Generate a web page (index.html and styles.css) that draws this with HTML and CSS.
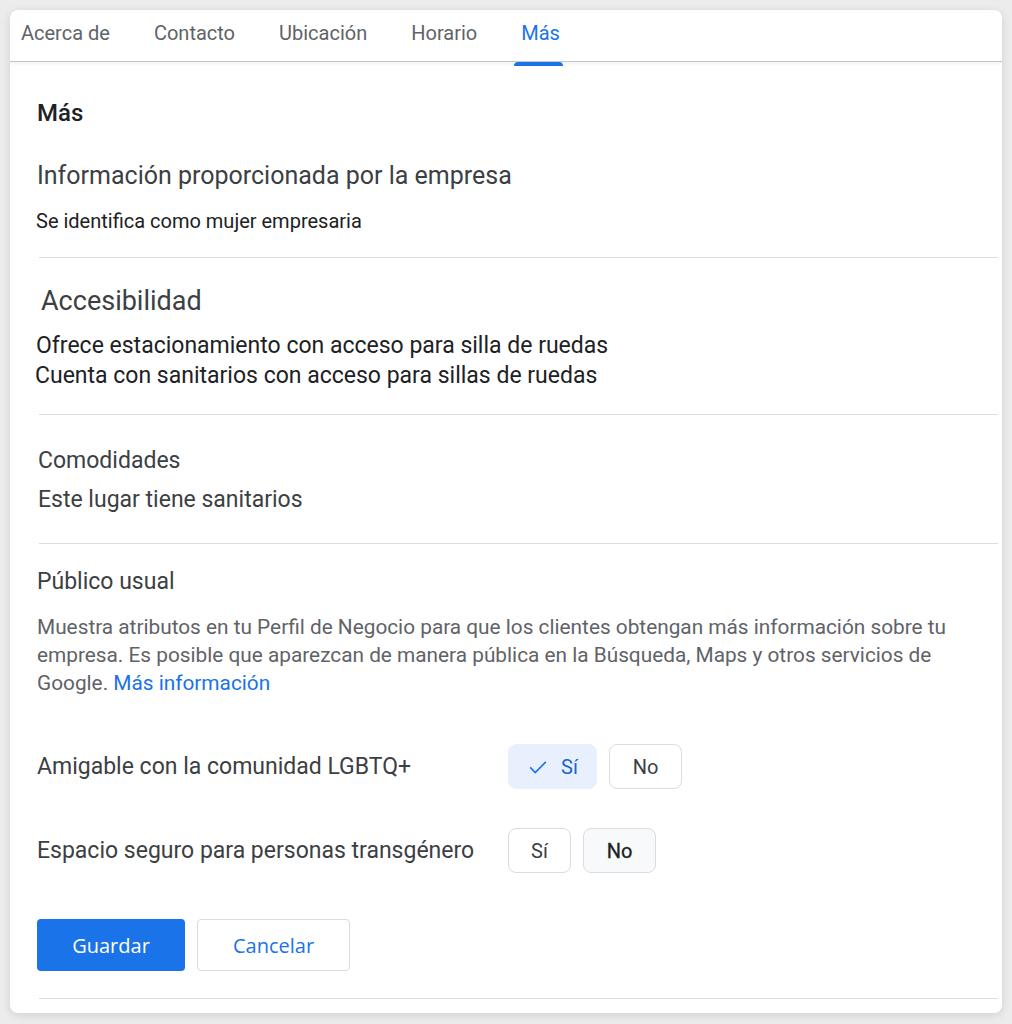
FILE: index.html
```html
<!DOCTYPE html>
<html lang="es">
<head>
    <meta charset="UTF-8">
    <meta name="viewport" content="width=device-width, initial-scale=1.0">
    <title>Más</title>
    <link rel="stylesheet" href="styles.css">
</head>
<body>
    <div class="card">
        <nav class="tabs">
            <a class="tab">Acerca de</a>
            <a class="tab">Contacto</a>
            <a class="tab">Ubicación</a>
            <a class="tab">Horario</a>
            <a class="tab active">Más</a>
        </nav>
        <div class="content">
            <h1 class="page-title">Más</h1>

            <section class="block first">
                <h2 class="info-title">Información proporcionada por la empresa</h2>
                <p class="info-text">Se identifica como mujer empresaria</p>
            </section>
            <hr class="divider">

            <section class="block access">
                <h2 class="access-title">Accesibilidad</h2>
                <p class="access-line">Ofrece estacionamiento con acceso para silla de ruedas</p>
                <p class="access-line second">Cuenta con sanitarios con acceso para sillas de ruedas</p>
            </section>
            <hr class="divider">

            <section class="block amenities">
                <h2 class="sub-title">Comodidades</h2>
                <p class="amenity">Este lugar tiene sanitarios</p>
            </section>
            <hr class="divider">

            <section class="block audience">
                <h2 class="sub-title">Público usual</h2>
                <p class="help">Muestra atributos en tu Perfil de Negocio para que los clientes obtengan más información sobre tu empresa. Es posible que aparezcan de manera pública en la Búsqueda, Maps y otros servicios de Google. <a class="link">Más información</a></p>

                <div class="attr-row first-row">
                    <span class="attr-label">Amigable con la comunidad LGBTQ+</span>
                    <div class="chips">
                        <button class="chip selected" type="button">
                            <svg class="check" viewBox="0 0 24 24" width="22" height="22"><polyline points="3.5,12.5 9,18 20.5,6.5" fill="none" stroke="#1a73e8" stroke-width="1.8"/></svg>
                            Sí
                        </button>
                        <button class="chip" type="button">No</button>
                    </div>
                </div>

                <div class="attr-row">
                    <span class="attr-label">Espacio seguro para personas transgénero</span>
                    <div class="chips">
                        <button class="chip small" type="button">Sí</button>
                        <button class="chip pressed" type="button">No</button>
                    </div>
                </div>
            </section>

            <div class="actions">
                <button class="btn primary" type="button">Guardar</button>
                <button class="btn outline" type="button">Cancelar</button>
            </div>
            <hr class="divider last">
        </div>
    </div>
</body>
</html>
```

FILE: styles.css
```css
body {
    margin: 0;
    padding: 10px;
    background-color: #ececec;
    font-family: Roboto, "Noto Sans", sans-serif;
    color: #202124;
}
.card {
    background-color: white;
    border-radius: 8px;
    box-shadow: 0 2px 10px rgba(0, 0, 0, 0.12);
    height: 1003px;
    overflow: hidden;
}
.tabs {
    display: flex;
    height: 51px;
    padding-left: 11px;
    border-bottom: 1px solid #c4c6c8;
    box-shadow: 0 2px 4px rgba(0, 0, 0, 0.06);
}
.tab {
    position: relative;
    margin-right: 44px;
    font-size: 20px;
    line-height: 46px;
    color: #5f6368;
}
.tab.active {
    color: #1a73e8;
}
.tab.active::after {
    content: "";
    position: absolute;
    left: -7px;
    right: -3px;
    bottom: -5px;
    height: 4px;
    border-radius: 4px 4px 0 0;
    background-color: #1a73e8;
}
.content {
    padding: 0 4px 0 27px;
}
h1, h2, p {
    margin: 0;
    font-weight: 400;
}
.page-title {
    margin-top: 37px;
    font-size: 24px;
    line-height: 28px;
    font-weight: 500;
    color: #202124;
}
.info-title {
    margin-top: 35px;
    font-size: 25px;
    line-height: 28px;
    color: #3c4043;
}
.info-text {
    margin-top: 19px;
    margin-left: -1px;
    font-size: 20px;
    line-height: 24px;
    color: #202124;
}
.divider {
    border: none;
    border-top: 1px solid #dadce0;
    margin: 24px 0 0 2px;
}
.access-title {
    margin-top: 28px;
    margin-left: 4px;
    font-size: 27px;
    line-height: 30px;
    color: #3c4043;
}
.access-line {
    margin-left: -1px;
    font-size: 23px;
    line-height: 30px;
    color: #202124;
}
.access-line:first-of-type {
    margin-top: 15px;
}
.access-line.second {
    margin-left: -2px;
}
.access + .divider {
    margin-top: 23px;
}
.sub-title {
    font-size: 23px;
    line-height: 28px;
    color: #3c4043;
}
.amenities .sub-title {
    margin-top: 32px;
    margin-left: 1px;
}
.amenity {
    margin-top: 11px;
    margin-left: 1px;
    font-size: 23px;
    line-height: 28px;
    color: #3c4043;
}
.amenities + .divider {
    margin-top: 29px;
}
.audience .sub-title {
    margin-top: 24px;
}
.help {
    margin-top: 17px;
    padding-right: 20px;
    font-size: 20.8px;
    line-height: 28px;
    color: #5f6368;
}
.link {
    color: #1a73e8;
}
.attr-row {
    display: flex;
    align-items: center;
    margin-top: 39px;
}
.attr-row.first-row {
    margin-top: 47px;
}
.attr-label {
    width: 471px;
    font-size: 23px;
    color: #3c4043;
}
.chips {
    display: flex;
    gap: 12px;
}
.chip {
    display: flex;
    align-items: center;
    justify-content: center;
    gap: 12px;
    height: 45px;
    width: 73px;
    padding: 0;
    border: 1px solid #dadce0;
    border-radius: 8px;
    background-color: white;
    font-family: Roboto, sans-serif;
    font-size: 20px;
    color: #3c4043;
}
.chip.selected {
    width: 89px;
    border-color: #e8f0fe;
    background-color: #e8f0fe;
    color: #1967d2;
}
.chip.small {
    width: 63px;
}
.chip.pressed {
    background-color: #f8f9fa;
    color: #202124;
    -webkit-text-stroke: 0.3px #202124;
}
.actions {
    display: flex;
    gap: 12px;
    margin-top: 46px;
}
.btn {
    height: 52px;
    border-radius: 4px;
    font-family: "Open Sans", sans-serif;
    font-size: 20px;
    font-weight: 500;
    cursor: pointer;
}
.btn.primary {
    width: 148px;
    border: none;
    background-color: #1a73e8;
    color: white;
}
.btn.outline {
    width: 153px;
    border: 1px solid #dadce0;
    background-color: white;
    color: #1a73e8;
}
.divider.last {
    margin-top: 27px;
}
```
